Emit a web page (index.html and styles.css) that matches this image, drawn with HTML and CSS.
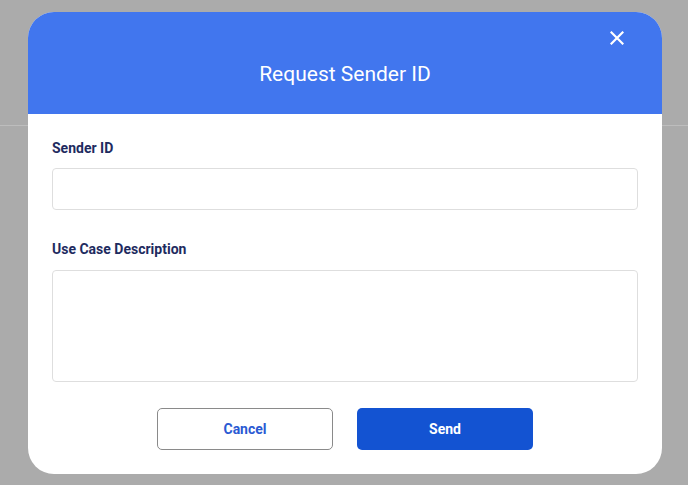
FILE: index.html
```html
<!DOCTYPE html>
<html>
<head>
<meta charset="utf-8">
<link rel="stylesheet" href="styles.css">
</head>
<body>
<div class="page-line"></div>
<div class="modal">
  <div class="modal-header">
    <h1 class="modal-title">Request Sender ID</h1>
    <button class="close-btn" aria-label="Close">
      <svg width="14" height="14" viewBox="0 0 14 14"><path d="M1.5 1.5 L12.5 12.5 M12.5 1.5 L1.5 12.5" stroke="#fff" stroke-width="2.2" stroke-linecap="square"/></svg>
    </button>
  </div>
  <div class="modal-body">
    <label class="field-label">Sender ID</label>
    <input class="field-input" type="text">
    <label class="field-label second">Use Case Description</label>
    <textarea class="field-textarea"></textarea>
    <div class="actions">
      <button class="btn btn-cancel">Cancel</button>
      <button class="btn btn-send">Send</button>
    </div>
  </div>
</div>
</body>
</html>
```

FILE: styles.css
```css
html, body {
  margin: 0;
  padding: 0;
}
body {
  background: #ababab;
  font-family: Roboto, "Liberation Sans", sans-serif;
  padding-top: 12px;
  height: 485px;
  box-sizing: border-box;
  position: relative;
  overflow: hidden;
}
.page-line {
  position: absolute;
  left: 0;
  right: 0;
  top: 125px;
  height: 1px;
  background: #bdbdbd;
}
.modal {
  position: relative;
  width: 634px;
  margin-left: 28px;
  background: #fff;
  border-radius: 26px;
  overflow: hidden;
  height: 462px;
}
.modal-header {
  position: relative;
  background: #4176ee;
  height: 102px;
  box-sizing: border-box;
  padding-top: 49px;
  text-align: center;
}
.modal-title {
  margin: 0;
  font-size: 21px;
  line-height: 26px;
  font-weight: 400;
  color: #fff;
}
.close-btn {
  position: absolute;
  right: 38px;
  top: 19px;
  width: 14px;
  height: 14px;
  padding: 0;
  border: 0;
  background: none;
  display: block;
}
.close-btn svg {
  display: block;
}
.modal-body {
  padding: 24px 24px 0;
  display: flex;
  flex-direction: column;
}
.field-label {
  font-size: 14px;
  line-height: 20px;
  font-weight: 700;
  color: #1e2b5f;
  margin-bottom: 10px;
}
.field-label.second {
  margin-top: 29px;
  margin-bottom: 11px;
}
.field-input, .field-textarea {
  box-sizing: border-box;
  width: 100%;
  border: 1px solid #dedede;
  border-radius: 4px;
  background: #fff;
  font-family: inherit;
  margin: 0;
  display: block;
}
.field-input {
  height: 42px;
}
.field-textarea {
  height: 112px;
  resize: none;
}
.actions {
  display: flex;
  justify-content: center;
  gap: 24px;
  margin-top: 26px;
}
.btn {
  width: 176px;
  height: 42px;
  border-radius: 5px;
  font-family: inherit;
  font-size: 14px;
  font-weight: 700;
  box-sizing: border-box;
}
.btn-cancel {
  background: #fff;
  border: 1px solid #8a8a8a;
  color: #2b5ad3;
}
.btn-send {
  background: #1353d2;
  border: 0;
  color: #fff;
}
```
